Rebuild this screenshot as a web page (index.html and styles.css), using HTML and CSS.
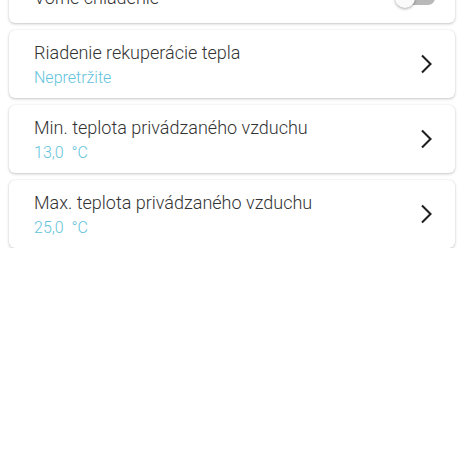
FILE: index.html
```html
<!DOCTYPE html>
<html lang="sk">
<head>
<meta charset="utf-8">
<link rel="stylesheet" href="styles.css">
</head>
<body>
<div class="list">
  <div class="card card-switch">
    <div class="texts"><div class="title">Voľné chladenie</div></div>
    <div class="switch"><span class="thumb"></span></div>
  </div>
  <div class="card">
    <div class="texts">
      <div class="title">Riadenie rekuperácie tepla</div>
      <div class="sub">Nepretržite</div>
    </div>
    <svg class="chev" width="14" height="20" viewBox="0 0 14 20"><path d="M3 1.5 L11.5 10 L3 18.5" fill="none" stroke="#1e1e1e" stroke-width="2.1"/></svg>
  </div>
  <div class="card">
    <div class="texts">
      <div class="title">Min. teplota privádzaného vzduchu</div>
      <div class="sub">13,0&nbsp; °C</div>
    </div>
    <svg class="chev" width="14" height="20" viewBox="0 0 14 20"><path d="M3 1.5 L11.5 10 L3 18.5" fill="none" stroke="#1e1e1e" stroke-width="2.1"/></svg>
  </div>
  <div class="card">
    <div class="texts">
      <div class="title">Max. teplota privádzaného vzduchu</div>
      <div class="sub">25,0&nbsp; °C</div>
    </div>
    <svg class="chev" width="14" height="20" viewBox="0 0 14 20"><path d="M3 1.5 L11.5 10 L3 18.5" fill="none" stroke="#1e1e1e" stroke-width="2.1"/></svg>
  </div>
</div>
</body>
</html>
```
FILE: styles.css
```css
html, body {
  margin: 0;
  padding: 0;
  background: #ffffff;
  font-family: Roboto, "Liberation Sans", sans-serif;
}
.list {
  display: flex;
  flex-direction: column;
  gap: 7px;
  padding: 0 9px;
  margin-top: -27px;
}
.card {
  background: #fff;
  border-radius: 6px;
  box-shadow: 0 1px 3px rgba(0,0,0,0.22), 0 0 1px rgba(0,0,0,0.12);
  height: 68px;
  box-sizing: border-box;
  display: flex;
  align-items: center;
  padding: 0 22px 0 25px;
}
.card-switch {
  height: 50px;
}
.texts {
  flex: 1;
  display: flex;
  flex-direction: column;
}
.title {
  font-size: 18px;
  font-weight: 300;
  color: #333333;
  line-height: 24px;
}
.sub {
  font-size: 16px;
  font-weight: 300;
  color: #62c3db;
  line-height: 20px;
  margin-top: 3px;
}
.chev {
  display: block;
}
.switch {
  position: relative;
  width: 36px;
  height: 14px;
  border-radius: 7px;
  background: #b9b9b9;
  margin-right: -2px;
}
.thumb {
  position: absolute;
  left: -4px;
  top: -3px;
  width: 20px;
  height: 20px;
  border-radius: 50%;
  background: #fafafa;
  box-shadow: 0 1px 3px rgba(0,0,0,0.35);
}
```
